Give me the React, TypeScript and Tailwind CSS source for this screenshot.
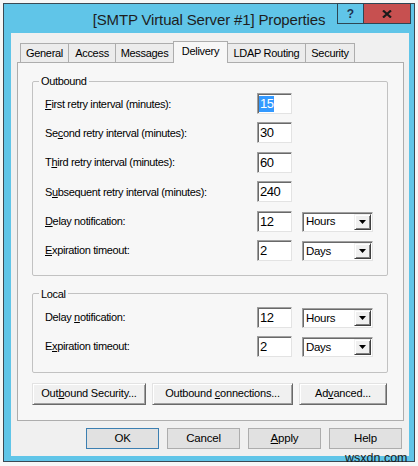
import React from "react";

function U({ children }: { children: React.ReactNode }) {
  return <span className="underline underline-offset-[1px] decoration-[1px]">{children}</span>;
}

function TextBox({ value, selected }: { value: string; selected?: boolean }) {
  return (
    <div className="flex h-[21px] w-[35px] shrink-0 items-center border border-b-[#e3e3e3] border-l-[#a0a0a0] border-r-[#e3e3e3] border-t-[#a0a0a0] bg-white pl-px text-[13px] leading-none tracking-[-0.5px] shadow-[inset_1px_1px_0_#696969]">
      {selected ? (
        <span className="bg-[#3399ff] px-px leading-[16px] text-white">{value}</span>
      ) : (
        <span className="pl-px">{value}</span>
      )}
    </div>
  );
}

function Combo({ value }: { value: string }) {
  return (
    <div className="flex h-[20px] w-[71px] shrink-0 items-center border border-b-[#e3e3e3] border-l-[#a0a0a0] border-r-[#e3e3e3] border-t-[#a0a0a0] bg-white pl-[3px] pr-px pt-px shadow-[inset_1px_1px_0_#696969]">
      <span className="flex-1 text-[11.5px] leading-none tracking-[-0.3px]">{value}</span>
      <div className="flex h-[16px] w-[17px] items-center justify-center border border-b-[#404040] border-l-[#f0f0f0] border-r-[#404040] border-t-[#f0f0f0] bg-[#f0f0f0] shadow-[inset_1px_1px_0_#ffffff,inset_-1px_-1px_0_#808080]">
        <svg width="7" height="4" viewBox="0 0 7 4">
          <path d="M0 0h7L3.5 4z" fill="#000" />
        </svg>
      </div>
    </div>
  );
}

function Row({
  label,
  value,
  combo,
  selected,
}: {
  label: React.ReactNode;
  value: string;
  combo?: string;
  selected?: boolean;
}) {
  return (
    <div className="flex h-[21px] items-center">
      <div className="w-[212px] shrink-0 pt-px text-[11px] leading-none tracking-[-0.35px]">{label}</div>
      <TextBox value={value} selected={selected} />
      {combo && (
        <div className="ml-[10px] flex items-center pt-[1px]">
          <Combo value={combo} />
        </div>
      )}
    </div>
  );
}

function Btn3D({ children, className }: { children: React.ReactNode; className: string }) {
  return (
    <div
      className={
        "flex h-[22px] items-center justify-center border border-b-[#696969] border-l-[#e3e3e3] border-r-[#696969] border-t-[#e3e3e3] bg-[#f0f0f0] text-[11px] leading-none tracking-[-0.2px] shadow-[inset_1px_1px_0_#ffffff,inset_-1px_-1px_0_#a0a0a0] " +
        className
      }
    >
      <span className="whitespace-pre">{children}</span>
    </div>
  );
}

function DlgBtn({ children, primary }: { children: React.ReactNode; primary?: boolean }) {
  return (
    <div
      className={
        primary
          ? "flex h-[21px] w-[73px] items-center justify-center border border-[#3c7fb1] bg-[#e1e1e1] text-[11.5px] leading-none tracking-[-0.2px]"
          : "flex h-[21px] w-[73px] items-center justify-center border border-[#adadad] bg-[#e1e1e1] text-[11.5px] leading-none tracking-[-0.2px]"
      }
    >
      <span>{children}</span>
    </div>
  );
}

const tabs = [
  { name: "General", w: "w-[49px]" },
  { name: "Access", w: "w-[48px]" },
  { name: "Messages", w: "w-[59px]" },
  { name: "Delivery", w: "w-[55px]", active: true },
  { name: "LDAP Routing", w: "w-[79px]" },
  { name: "Security", w: "w-[50px]" },
];

export default function App() {
  return (
    <div className="relative h-[466px] w-[418px] overflow-hidden bg-[#f7f7f7] pl-[3px] pt-[3px] font-['Liberation_Sans',Arial,sans-serif] text-black">
      <div className="relative flex h-[459px] w-[412px] flex-col border border-[#3a4a55] bg-[#60c5e8]">
        {/* Title bar */}
        <div className="flex h-[29px] shrink-0 items-center justify-center pt-[2px] text-[15px] leading-none tracking-[-0.15px] text-[#1e1e1e]">
          [SMTP Virtual Server #1] Properties
        </div>
        <div className="absolute right-[3px] top-[-1px] flex">
          <div className="flex h-[21px] w-[27px] items-center justify-center border border-[#2d4654] bg-[#60c5e8] text-[12px] font-bold leading-none text-[#1d3050]">
            ?
          </div>
          <div className="-ml-px flex h-[21px] w-[48px] items-center justify-center border border-[#2d4654] bg-[#c75050]">
            <svg width="10" height="8" viewBox="0 0 10 8">
              <path d="M1 0.5L9 7.5M9 0.5L1 7.5" stroke="#1a1a1a" strokeWidth="2.2" />
            </svg>
          </div>
        </div>

        {/* Client area */}
        <div className="ml-[7px] flex h-[423px] w-[398px] shrink-0 flex-col bg-[#f0f0f0] pl-[6px] pr-[5px] pt-[8px]">
          {/* Tabs */}
          <div className="flex h-[21px] items-end pl-[3px]">
            {tabs.map((t, i) =>
              t.active ? (
                <div
                  key={t.name}
                  className={
                    "relative z-10 -mb-px flex h-[22px] items-center justify-center border border-b-0 border-[#adadad] bg-[#f7f7f7] pb-[2px] text-[11px] leading-none tracking-[-0.3px] " +
                    t.w +
                    (i > 0 ? " -ml-px" : "")
                  }
                >
                  {t.name}
                </div>
              ) : (
                <div
                  key={t.name}
                  className={
                    "flex h-[19px] items-center justify-center border border-b-0 border-[#adadad] bg-[#ececec] text-[11px] leading-none tracking-[-0.3px] " +
                    t.w +
                    (i > 0 ? " -ml-px" : "")
                  }
                >
                  {t.name}
                </div>
              )
            )}
          </div>

          {/* Panel */}
          <div className="flex h-[359px] w-[387px] shrink-0 flex-col border border-[#adadad] bg-[#f7f7f7] pl-[14px] pt-[11px]">
            <fieldset className="w-[356px] rounded-[2px] border border-[#c2c2c2]">
              <legend className="ml-[6px] px-[2px] text-[11px] leading-[14px] tracking-[-0.35px]">Outbound</legend>
              <div className="flex flex-col gap-[8.4px] pb-[14px] pl-[12px] pt-[5px]">
                <Row label={<><U>F</U>irst retry interval (minutes):</>} value="15" selected />
                <Row label={<>Se<U>c</U>ond retry interval (minutes):</>} value="30" />
                <Row label={<>T<U>h</U>ird retry interval (minutes):</>} value="60" />
                <Row label={<>S<U>u</U>bsequent retry interval (minutes):</>} value="240" />
                <Row label={<><U>D</U>elay notification:</>} value="12" combo="Hours" />
                <Row label={<><U>E</U>xpiration timeout:</>} value="2" combo="Days" />
              </div>
            </fieldset>

            <fieldset className="mt-[11px] w-[356px] rounded-[2px] border border-[#c2c2c2]">
              <legend className="ml-[6px] px-[2px] text-[11px] leading-[14px] tracking-[-0.35px]">Local</legend>
              <div className="flex flex-col gap-[8px] pb-[15px] pl-[12px] pt-[6px]">
                <Row label={<>Delay <U>n</U>otification:</>} value="12" combo="Hours" />
                <Row label={<>E<U>x</U>piration timeout:</>} value="2" combo="Days" />
              </div>
            </fieldset>

            <div className="mt-[10px] flex gap-[6px]">
              <Btn3D className="w-[114px]">
                Out<U>b</U>ound Security...
              </Btn3D>
              <Btn3D className="w-[141px]">
                {"Outbound "}<U>c</U>onnections...
              </Btn3D>
              <Btn3D className="w-[88px]">
                Ad<U>v</U>anced...
              </Btn3D>
            </div>
          </div>

          {/* Dialog buttons */}
          <div className="mt-[7px] flex justify-end gap-2 pr-[2px]">
            <DlgBtn primary>OK</DlgBtn>
            <DlgBtn>Cancel</DlgBtn>
            <DlgBtn>
              <U>A</U>pply
            </DlgBtn>
            <DlgBtn>Help</DlgBtn>
          </div>
        </div>
      </div>

      {/* watermark */}
      <div className="absolute left-[345px] top-[451px] text-[12.5px] leading-[14px] text-[#1a1a1a]">wsxdn.com</div>
    </div>
  );
}
